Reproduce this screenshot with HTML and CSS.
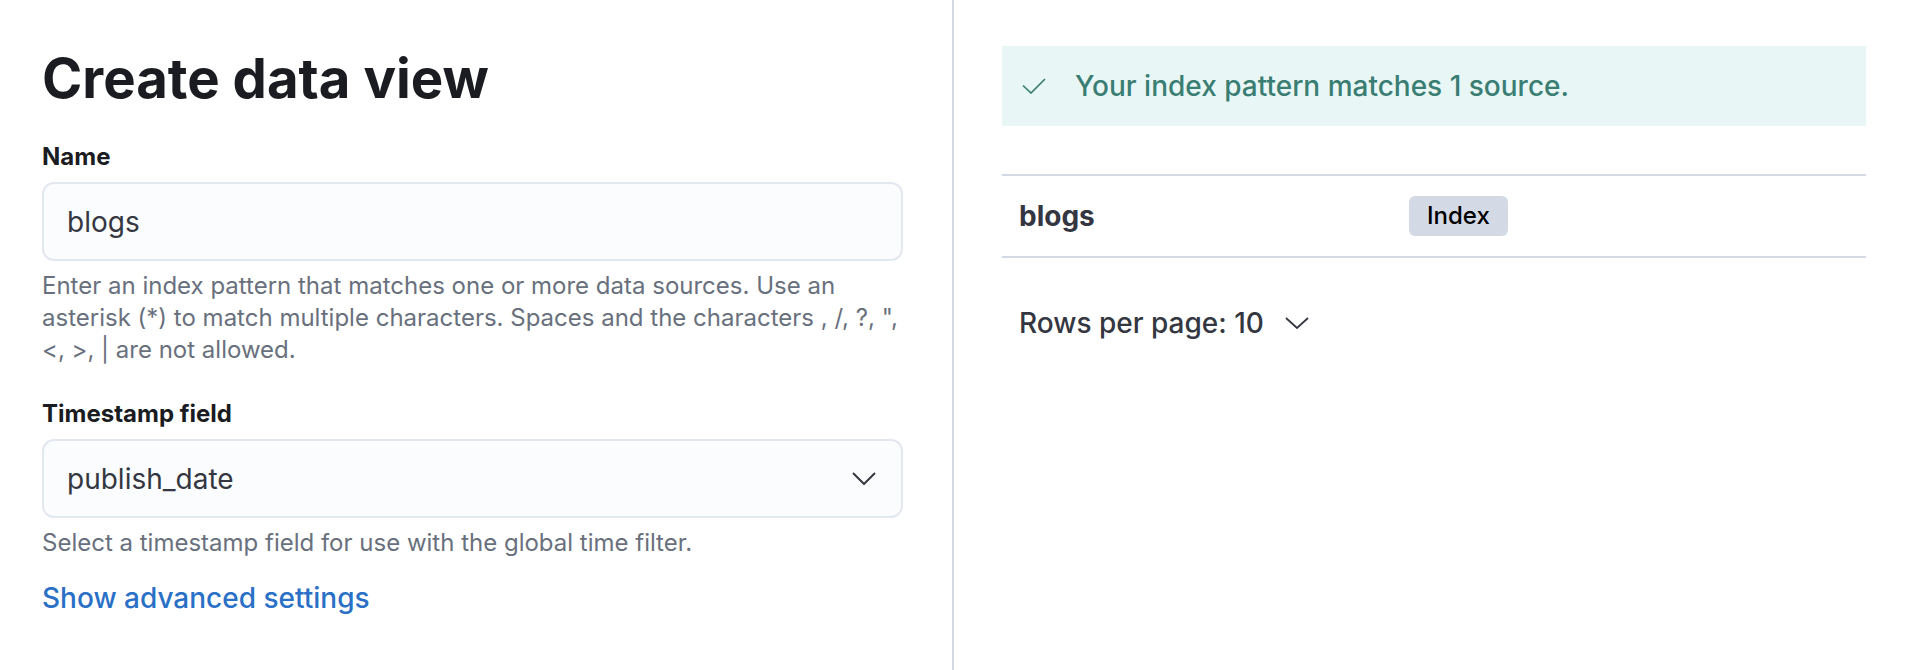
FILE: index.html
```html
<!DOCTYPE html>
<html lang="en">
  <head>
    <meta charset="UTF-8" />
    <meta name="viewport" content="width=device-width, initial-scale=1.0" />
    <title>Create data view</title>
    <link rel="stylesheet" href="styles.css">
  </head>
  <body>
    <div class="layout">
      <!-- Form -->
      <section class="form-pane">
        <h1 class="page-title">Create data view</h1>

        <div class="form-row">
          <label class="form-label" for="name">Name</label>
          <input class="field" type="text" id="name" value="blogs" />
          <p class="help">
            Enter an index pattern that matches one or more data sources. Use an
            asterisk (*) to match multiple characters. Spaces and the characters , /, ?, ",
            &lt;, &gt;, | are not allowed.
          </p>
        </div>

        <div class="form-row">
          <span class="form-label">Timestamp field</span>
          <div class="field field-select">
            <span>publish_date</span>
            <svg class="chevron" width="24" height="13" viewBox="0 0 24 13">
              <path d="M1 1 L12 12 L23 1" fill="none" stroke="#343741" stroke-width="2" />
            </svg>
          </div>
          <p class="help">Select a timestamp field for use with the global time filter.</p>
        </div>

        <a class="advanced-link" href="#">Show advanced settings</a>
      </section>

      <!-- Preview -->
      <section class="preview-pane">
        <div class="callout">
          <svg width="24" height="16" viewBox="0 0 24 16">
            <path d="M1 7.5 L9 15 L23 1" fill="none" stroke="#3a7d73" stroke-width="1.7" />
          </svg>
          <span>Your index pattern matches 1 source.</span>
        </div>

        <div class="sources-table">
          <div class="table-row">
            <div class="cell-name">blogs</div>
            <div><span class="badge">Index</span></div>
          </div>
        </div>

        <div class="pagination">
          <span>Rows per page: 10</span>
          <svg width="24" height="12" viewBox="0 0 24 12">
            <path d="M1 1 L12 11 L23 1" fill="none" stroke="#343741" stroke-width="1.8" />
          </svg>
        </div>
      </section>
    </div>
  </body>
</html>
```

FILE: styles.css
```css
* {
  margin: 0;
  padding: 0;
  box-sizing: border-box;
  font-family: Inter, "Noto Sans", sans-serif;
}

:root {
  --text: #343741;
  --title: #1a1c21;
  --subdued: #69707d;
  --border: #d3dae6;
  --link: #2970c6;
  --success: #3a7d73;
}

body {
  background: #fff;
  color: var(--text);
}

.layout {
  display: grid;
  grid-template-columns: 954px 1fr;
  height: 100vh;
}

/* Form pane */
.form-pane {
  border-right: 2px solid var(--border);
  padding: 46px 49px 0 42px;
}

.page-title {
  font-size: 54.5px;
  font-weight: 700;
  line-height: 64px;
  color: var(--title);
  margin-bottom: 32px;
}

.form-row + .form-row {
  margin-top: 33px;
}

.form-label {
  display: block;
  font-size: 24px;
  font-weight: 700;
  line-height: 30px;
  color: var(--title);
  margin-bottom: 10px;
}

.field {
  display: flex;
  align-items: center;
  justify-content: space-between;
  width: 100%;
  height: 79px;
  padding: 0 25px 0 23px;
  border: 2px solid #e3e7ef;
  border-radius: 12px;
  background: #fbfcfd;
  font-size: 28px;
  color: var(--text);
  outline: none;
}

.help {
  margin-top: 9px;
  font-size: 24px;
  line-height: 32px;
  color: var(--subdued);
}

.advanced-link {
  display: inline-block;
  margin-top: 22px;
  font-size: 28px;
  font-weight: 500;
  line-height: 34px;
  color: var(--link);
  text-decoration: none;
}

/* Preview pane */
.preview-pane {
  padding: 46px 44px 0 48px;
}

.callout {
  display: flex;
  align-items: center;
  gap: 29px;
  height: 80px;
  padding-left: 20px;
  background: #e8f7f5;
  color: var(--success);
  font-size: 28px;
  font-weight: 500;
}

.sources-table {
  margin-top: 48px;
  border-top: 2px solid var(--border);
}

.table-row {
  display: grid;
  grid-template-columns: 407px 1fr;
  align-items: center;
  height: 82px;
  border-bottom: 2px solid var(--border);
}

.cell-name {
  padding-left: 17px;
  font-size: 28px;
  font-weight: 700;
}

.badge {
  display: inline-block;
  padding: 0 18px;
  border-radius: 6px;
  background: var(--border);
  color: #000;
  font-size: 24px;
  font-weight: 500;
  line-height: 40px;
}

.pagination {
  display: flex;
  align-items: center;
  gap: 21px;
  margin-top: 41px;
  padding-left: 17px;
  font-size: 28px;
  font-weight: 500;
  line-height: 48px;
}
```
